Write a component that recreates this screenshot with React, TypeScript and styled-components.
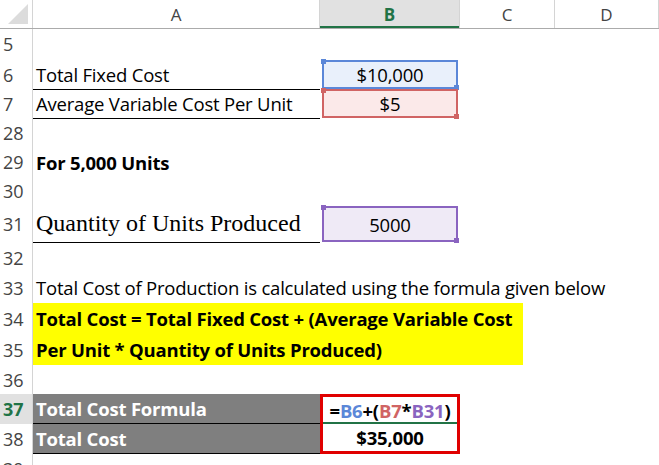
import React from 'react'
import styled, { createGlobalStyle, css } from 'styled-components'

const Global = createGlobalStyle`
  body { margin: 0; background: #fff; font-family: "Open Sans", "Liberation Sans", Arial, sans-serif; }
`

const Sheet = styled.div`
  width: 659px;
  height: 465px;
  overflow: hidden;
`

const cols = '33px 287px 140px 95px 104px'

const HeaderRow = styled.div`
  display: grid;
  grid-template-columns: ${cols};
  height: 28px;
  border-bottom: 1px solid #ababab;
`

const ColHead = styled.div<{ $active?: boolean }>`
  display: flex;
  align-items: center;
  justify-content: center;
  font-size: 17px;
  color: ${p => (p.$active ? '#217346' : '#444')};
  font-weight: ${p => (p.$active ? 'bold' : 'normal')};
  background: ${p => (p.$active ? '#e1e1e1' : '#fff')};
  border-right: 1px solid #d4d4d4;
  ${p => p.$active && css`box-shadow: inset 0 -2px 0 #217346;`}
`

const Corner = styled.div`
  border-right: 1px solid #d4d4d4;
  position: relative;
  &::after {
    content: '';
    position: absolute;
    right: 4px;
    bottom: 4px;
    border-left: 20px solid transparent;
    border-bottom: 20px solid #dcdcdc;
  }
`

const Row = styled.div<{ $h: number }>`
  display: grid;
  grid-template-columns: ${cols};
  height: ${p => p.$h}px;
`

const RowNum = styled.div<{ $active?: boolean }>`
  display: flex;
  align-items: center;
  padding-left: 3px;
  font-size: 18px;
  color: ${p => (p.$active ? '#217346' : '#444')};
  font-weight: ${p => (p.$active ? 'bold' : 'normal')};
  background: ${p => (p.$active ? '#e1e1e1' : '#fff')};
  border-right: 1px solid #d4d4d4;
`

const Cell = styled.div<{ $bold?: boolean; $center?: boolean; $serif?: boolean; $span?: number }>`
  display: flex;
  align-items: center;
  justify-content: ${p => (p.$center ? 'center' : 'flex-start')};
  padding: 0 3px;
  white-space: nowrap;
  overflow: visible;
  font-size: ${p => (p.$serif ? '24px' : '18.5px')};
  font-family: ${p => (p.$serif ? '"Liberation Serif", serif' : 'inherit')};
  font-weight: ${p => (p.$bold ? 'bold' : 'normal')};
  letter-spacing: ${p => (p.$serif ? '0' : '-0.2px')};
  color: #000;
  ${p => p.$span && css`grid-column: span ${p.$span};`}
`

const Label = styled(Cell)<{ $line?: boolean; $dark?: boolean }>`
  ${p => p.$line && css`border-bottom: 1.5px solid #000;`}
  ${p => p.$dark && css`background: #7f7f7f; color: #fff; font-weight: bold; border-bottom: 1px solid #000;`}
`

const Yellow = styled(Cell)`
  background: #ffff00;
  grid-column: span 4;
  width: 484px;
`

const Ref = styled(Cell)<{ $color: string; $bg: string }>`
  margin: 1px 2px;
  background: ${p => p.$bg};
  border: 2px solid ${p => p.$color};
  position: relative;
  &::before, &::after {
    content: '';
    position: absolute;
    width: 5px;
    height: 5px;
    background: ${p => p.$color};
  }
  &::before { top: -3px; left: -3px; }
  &::after { bottom: -3px; right: -3px; }
`

const Result = styled(Cell)<{ $top?: boolean }>`
  border: 3px solid #e00000;
  border-top-width: ${p => (p.$top ? 3 : 0)}px;
  border-bottom-width: ${p => (p.$top ? 0 : 3)}px;
  font-weight: bold;
  ${p => p.$top && css`box-shadow: inset 0 -2px 0 #217346;`}
`

const F = styled.span<{ $c: string }>`
  color: ${p => p.$c};
`

const rows: [string, number, React.ReactNode][] = [
  ['5', 30, null],
  ['6', 29, <>
    <Label $line>Total Fixed Cost</Label>
    <Ref $center $color="#5b87d8" $bg="#e9f0fb">$10,000</Ref>
  </>],
  ['7', 30, <>
    <Label $line>Average Variable Cost Per Unit</Label>
    <Ref $center $color="#d06464" $bg="#fbe9e9">$5</Ref>
  </>],
  ['28', 29, null],
  ['29', 30, <Label $bold>For 5,000 Units</Label>],
  ['30', 28, null],
  ['31', 38, <>
    <Label $serif $line>Quantity of Units Produced</Label>
    <Ref $center $color="#8a64c0" $bg="#efeaf6">5000</Ref>
  </>],
  ['32', 29, null],
  ['33', 31, <Cell $span={4}>Total Cost of Production is calculated using the formula given below</Cell>],
  ['34', 31, <Yellow $bold>Total Cost = Total Fixed Cost + (Average Variable Cost</Yellow>],
  ['35', 31, <Yellow $bold>Per Unit * Quantity of Units Produced)</Yellow>],
  ['36', 29, null],
  ['37', 30, <>
    <Label $dark>Total Cost Formula</Label>
    <Result $top $center>=<F $c="#5b87d8">B6</F>+(<F $c="#d06464">B7</F>*<F $c="#8a64c0">B31</F>)</Result>
  </>],
  ['38', 30, <>
    <Label $dark>Total Cost</Label>
    <Result $center>$35,000</Result>
  </>],
  ['39', 30, null],
]

const App = () => (
  <Sheet>
    <Global />
    <HeaderRow>
      <Corner />
      <ColHead>A</ColHead>
      <ColHead $active>B</ColHead>
      <ColHead>C</ColHead>
      <ColHead>D</ColHead>
    </HeaderRow>
    {rows.map(([n, h, content]) => (
      <Row key={n} $h={h}>
        <RowNum $active={n === '37'}>{n}</RowNum>
        {content}
      </Row>
    ))}
  </Sheet>
)

export default App
